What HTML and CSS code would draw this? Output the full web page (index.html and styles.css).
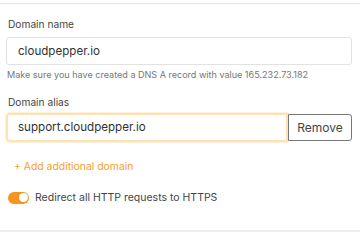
FILE: index.html
```html
<!DOCTYPE html>
<html>
<head>
<meta charset="utf-8">
<link rel="stylesheet" href="styles.css">
</head>
<body>
<div class="panel">
  <div class="field">
    <label class="label">Domain name</label>
    <div class="input">cloudpepper.io</div>
    <div class="help">Make sure you have created a DNS A record with value 165.232.73.182</div>
  </div>
  <div class="field alias">
    <label class="label">Domain alias</label>
    <div class="group">
      <div class="input focus">support.cloudpepper.io</div>
      <button class="btn">Remove</button>
    </div>
  </div>
  <a class="add">+ Add additional domain</a>
  <div class="switch-row">
    <span class="switch"><span class="knob"></span></span>
    <span class="switch-label">Redirect all HTTP requests to HTTPS</span>
  </div>
</div>
</body>
</html>
```
FILE: styles.css
```css
* { box-sizing: border-box; }
html, body { margin: 0; padding: 0; background: #fff; }
body { font-family: Inter, "Noto Sans", sans-serif; color: #333; width: 360px; height: 240px; overflow: hidden; }
.panel {
  border-top: 1px solid #e6e6e6;
  border-bottom: 2px solid #eee;
  margin-top: 3px;
  height: 229px;
  padding: 13px 8px 0 6px;
}
.label { display: block; font-size: 10.2px; color: #444; padding-left: 2px; line-height: 14px; margin-bottom: 6px; }
.input {
  height: 28px;
  border: 1px solid #e2e2e2;
  border-radius: 3px;
  font-size: 11.6px;
  line-height: 26px;
  padding-left: 11px;
  color: #333;
}
.help { font-size: 9.05px; color: #777; margin-top: 4px; padding-left: 1px; line-height: 12px; }
.alias { margin-top: 14px; }
.alias .label { margin-bottom: 4px; }
.group { display: flex; align-items: center; }
.input.focus {
  flex: 1;
  height: 29px;
  border: 2px solid #fde2b3;
  box-shadow: 0 0 0 1px #fff1d9;
  border-radius: 4px 0 0 4px;
  line-height: 25px;
  padding-left: 10px;
}
.btn {
  font-family: inherit;
  font-size: 12px;
  color: #444;
  background: #fff;
  border: 1px solid #777;
  border-radius: 0 3px 3px 0;
  height: 27px;
  width: 64px;
  padding: 0;
}
.add { display: block; font-size: 10.4px; color: #f5a02a; margin-top: 18px; padding-left: 8px; line-height: 14px; }
.switch-row { display: flex; align-items: center; margin-top: 17px; padding-left: 2px; }
.switch { width: 21px; height: 12px; border-radius: 6px; background: #f7941d; position: relative; display: inline-block; }
.knob { position: absolute; right: 1.5px; top: 1.5px; width: 9px; height: 9px; border-radius: 50%; background: #fff; }
.switch-label { font-size: 10.5px; color: #444; margin-left: 6px; }
```
